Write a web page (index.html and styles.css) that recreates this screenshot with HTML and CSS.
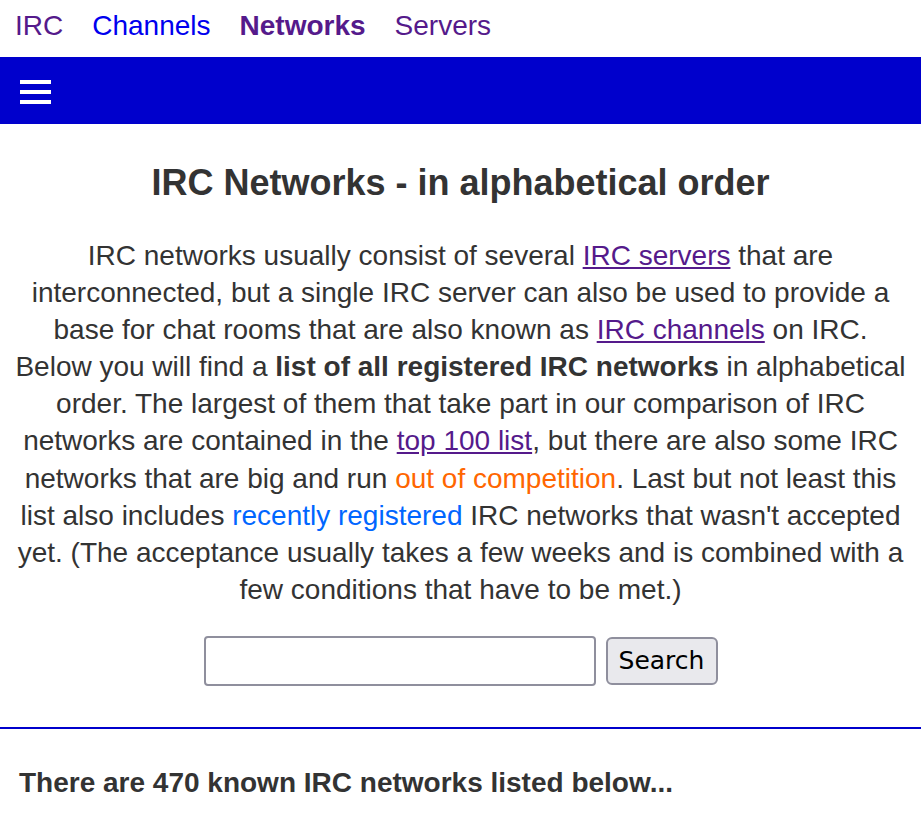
FILE: index.html
```html
<!DOCTYPE html>
<html lang="en">
<head>
<meta charset="utf-8">
<title>IRC Networks - in alphabetical order</title>
<link rel="stylesheet" href="styles.css">
</head>
<body>
<nav class="topnav">
  <a class="nav-link visited" href="#">IRC</a>
  <a class="nav-link fresh" href="#">Channels</a>
  <a class="nav-link visited current" href="#">Networks</a>
  <a class="nav-link visited" href="#">Servers</a>
</nav>
<div class="menubar">
  <svg class="burger" width="31" height="24" viewBox="0 0 31 24" aria-hidden="true">
    <rect x="0" y="0" width="31" height="4" fill="#ffffff"/>
    <rect x="0" y="10" width="31" height="4" fill="#ffffff"/>
    <rect x="0" y="20" width="31" height="4" fill="#ffffff"/>
  </svg>
</div>
<main class="content">
  <h1 class="title">IRC Networks - in alphabetical order</h1>
  <p class="intro">IRC networks usually consist of several <a class="ulink" href="#">IRC servers</a> that are interconnected, but a single IRC server can also be used to provide a base for chat rooms that are also known as <a class="ulink" href="#">IRC channels</a> on IRC. Below you will find a <strong>list of all registered IRC networks</strong> in alphabetical order. The largest of them that take part in our comparison of IRC networks are contained in the <a class="ulink" href="#">top 100 list</a>, but there are also some IRC networks that are big and run <span class="orange">out of competition</span>. Last but not least this list also includes <span class="bluish">recently registered</span> IRC networks that wasn't accepted yet. (The acceptance usually takes a few weeks and is combined with a few conditions that have to be met.)</p>
  <form class="search" onsubmit="return false;">
    <input class="search-input" type="text" aria-label="Search">
    <button class="search-btn" type="submit">Search</button>
  </form>
</main>
<hr class="divider">
<h2 class="count">There are 470 known IRC networks listed below...</h2>
</body>
</html>
```

FILE: styles.css
```css
html, body {
  margin: 0;
  padding: 0;
  background: #ffffff;
}

body {
  font-family: "Liberation Sans", Arial, sans-serif;
  color: #333333;
}

.topnav {
  display: flex;
  gap: 29px;
  padding: 10px 15px 15px 15px;
  font-size: 28px;
  line-height: 32px;
}

.nav-link {
  text-decoration: none;
}

.nav-link.visited {
  color: #551a8b;
}

.nav-link.fresh {
  color: #0000ee;
}

.nav-link.current {
  font-weight: bold;
}

.menubar {
  background: #0000cc;
  height: 67px;
  box-sizing: border-box;
  padding: 23px 0 0 20px;
}

.burger {
  display: block;
}

.content {
  padding: 38px 15px 0 15px;
  text-align: center;
}

.title {
  margin: 0;
  font-size: 36px;
  line-height: 41px;
  font-weight: bold;
  color: #333333;
}

.intro {
  margin: 34px 0 0 0;
  font-size: 28px;
  line-height: 37.1px;
}

.ulink {
  color: #551a8b;
  text-decoration: underline;
}

.orange {
  color: #ff6600;
}

.bluish {
  color: #0066ff;
}

.search {
  display: flex;
  justify-content: center;
  align-items: center;
  gap: 10px;
  margin-top: 28px;
}

.search-input {
  box-sizing: border-box;
  width: 392px;
  height: 50px;
  border: 2px solid #8f8f9d;
  border-radius: 4px;
  background: #ffffff;
  font-size: 24px;
  padding: 0 6px;
  margin: 0;
}

.search-btn {
  box-sizing: border-box;
  width: 112px;
  height: 48px;
  border: 2px solid #8f8f9d;
  border-radius: 6px;
  background: #e9e9ed;
  color: #000000;
  font-family: "DejaVu Sans", sans-serif;
  font-size: 25px;
  padding: 0;
  margin: 0;
}

.divider {
  margin: 41px 0 0 0;
  border: 0;
  height: 2px;
  background: #0000cc;
}

.count {
  margin: 38px 0 0 0;
  padding: 0 19px;
  font-size: 28px;
  line-height: 32px;
  font-weight: bold;
  color: #333333;
}
```
